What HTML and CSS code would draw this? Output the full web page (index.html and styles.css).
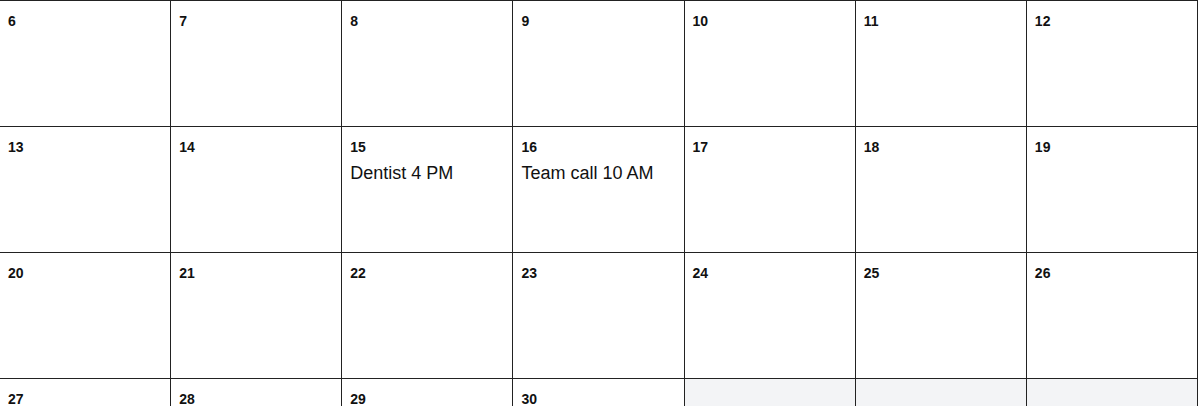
FILE: index.html
```html
<!DOCTYPE html>
<html lang="en">
<head>
<meta charset="utf-8">
<title>Calendar</title>
<link rel="stylesheet" href="styles.css">
</head>
<body>
<div class="month">
  <div class="day"><div class="num">6</div></div>
  <div class="day"><div class="num">7</div></div>
  <div class="day"><div class="num">8</div></div>
  <div class="day"><div class="num">9</div></div>
  <div class="day"><div class="num">10</div></div>
  <div class="day"><div class="num">11</div></div>
  <div class="day"><div class="num">12</div></div>

  <div class="day"><div class="num">13</div></div>
  <div class="day"><div class="num">14</div></div>
  <div class="day"><div class="num">15</div><div class="event">Dentist 4 PM</div></div>
  <div class="day"><div class="num">16</div><div class="event">Team call 10 AM</div></div>
  <div class="day"><div class="num">17</div></div>
  <div class="day"><div class="num">18</div></div>
  <div class="day"><div class="num">19</div></div>

  <div class="day"><div class="num">20</div></div>
  <div class="day"><div class="num">21</div></div>
  <div class="day"><div class="num">22</div></div>
  <div class="day"><div class="num">23</div></div>
  <div class="day"><div class="num">24</div></div>
  <div class="day"><div class="num">25</div></div>
  <div class="day"><div class="num">26</div></div>

  <div class="day"><div class="num">27</div></div>
  <div class="day"><div class="num">28</div></div>
  <div class="day"><div class="num">29</div></div>
  <div class="day"><div class="num">30</div></div>
  <div class="day empty"></div>
  <div class="day empty"></div>
  <div class="day empty"></div>
</div>
</body>
</html>
```

FILE: styles.css
```css
html, body {
  margin: 0;
  padding: 0;
  background: #ffffff;
  overflow: hidden;
}

body {
  font-family: "Liberation Sans", Arial, sans-serif;
  color: #111111;
}

.month {
  display: grid;
  grid-template-columns: repeat(7, 1fr);
  grid-auto-rows: 126px;
  width: 1199px;
  margin-left: -1px;
  box-sizing: border-box;
  border-top: 1px solid #222222;
  border-left: 1px solid #222222;
}

.day {
  box-sizing: border-box;
  border-right: 1px solid #222222;
  border-bottom: 1px solid #222222;
  padding: 12px 8px 8px 8px;
  background: #ffffff;
}

.day.empty {
  background: #f3f4f6;
}

.num {
  font-size: 14px;
  font-weight: 700;
}

.event {
  margin-top: 8px;
  font-size: 18px;
}
```
